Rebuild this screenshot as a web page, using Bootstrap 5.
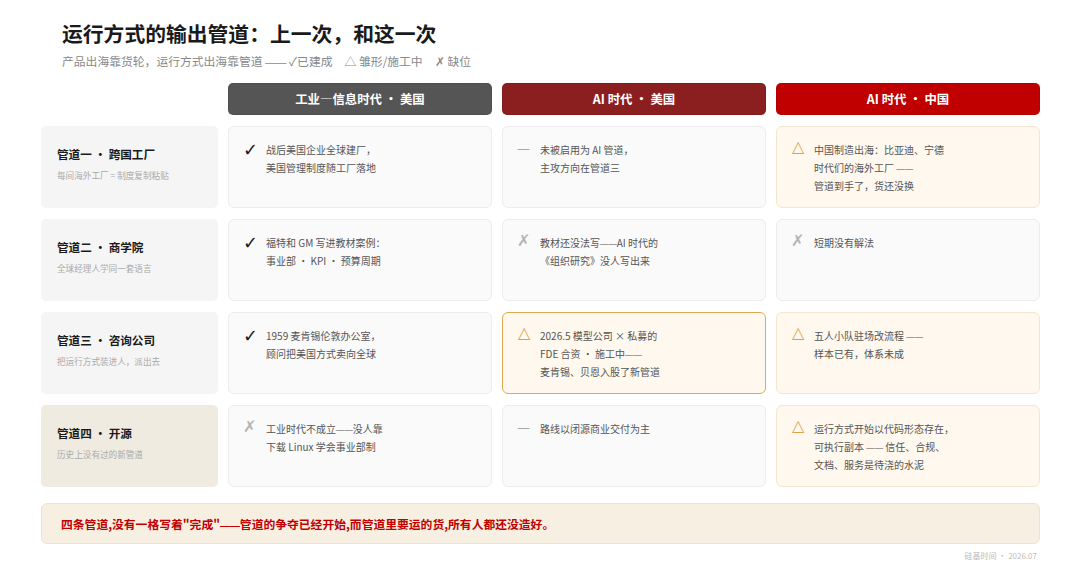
<!DOCTYPE html>
<html lang="zh-CN">
<head>
    <meta charset="UTF-8">
    <meta name="viewport" content="width=device-width, initial-scale=1">
    <title>运行方式的输出管道</title>
    <link href="https://cdn.jsdelivr.net/npm/bootstrap@5.3.0/dist/css/bootstrap.min.css" rel="stylesheet">
    <script src="https://cdn.jsdelivr.net/npm/bootstrap@5.3.0/dist/js/bootstrap.bundle.min.js"></script>
    <style>
        body {
            background: #fff;
            font-family: "Noto Sans CJK SC", "Noto Sans", sans-serif;
            color: #333;
            width: 1080px;
            height: 568px;
            overflow: hidden;
        }
        .slide { padding: 19px 40px 0 41px; }
        .page-head { padding-left: 21px; height: 64px; }
        .page-title { font-size: 20.8px; line-height: 28px; font-weight: 700; color: #1a1a1a; margin: 0; }
        .page-sub { font-size: 11.8px; line-height: 18px; color: #888; margin-top: 5px; }
        .legend-item { margin-left: 1.5px; }
        .pipe-grid {
            grid-template-columns: 177px repeat(3, 264px);
            grid-template-rows: 32px repeat(4, 82px);
            column-gap: 10px;
            row-gap: 11px;
        }
        .era { font-size: 12.4px; font-weight: 700; border-radius: 5px; color: #fff; border: 1px solid rgba(0,0,0,.08); }
        .era-grey { background: #555; }
        .era-dark { background: #8b1f1f; }
        .era-red { background: #c00000; }
        .pipe { background: #f5f5f5; border-radius: 5px; padding: 0 15px 6px 16px; }
        .pipe-open { background: #f0ebe0; }
        .pipe-name { font-size: 11.6px; line-height: 17px; font-weight: 700; color: #1a1a1a; }
        .pipe-note { font-size: 8.6px; line-height: 13px; color: #aaa; margin-top: 6px; }
        .cell {
            background: #fafafa;
            border: 1px solid #ececec;
            border-radius: 6px;
            padding: 14px 10px 0 14px;
            font-size: 10px;
            line-height: 18px;
            color: #555;
        }
        .cell-warm { background: #fff8ee; border-color: #f5e7cf; }
        .cell-hot { background: #fff8ee; border-color: #e0a950; }
        .status { flex: 0 0 23px; width: 23px; height: 18px; font-family: "DejaVu Sans", sans-serif; line-height: 14px; font-size: 16px; }
        .status-yes { color: #1a1a1a; font-weight: 700; font-size: 18px; line-height: 18px; }
        .status-no { color: #b4b4b4; }
        .status-dash { color: #a8a8a8; font-size: 13px; line-height: 16px; }
        .status-warn { color: #dea24a; font-size: 16px; line-height: 12px; padding-left: 1px; }
        .dash { font-family: "Liberation Sans", sans-serif; font-size: .84em; line-height: 1; }
        .page-sub .dash { font-size: .9em; }
        .summary {
            margin-top: 16px;
            height: 41px;
            background: #f6efe2;
            border: 1px solid #eee3cf;
            border-radius: 6px;
            padding-left: 19px;
            font-size: 11.8px;
            font-weight: 700;
            color: #c00000;
        }
        .foot { font-size: 8px; line-height: 12px; color: #bbb; margin-top: 6px; padding-right: 3px; }
    </style>
</head>
<body>
    <div class="slide">
        <div class="page-head">
            <h1 class="page-title">运行方式的输出管道：上一次，和这一次</h1>
            <div class="page-sub">产品出海靠货轮，运行方式出海靠管道 <span class="dash">——</span> ✓已建成 &nbsp;&nbsp; <span class="legend-item">△ 雏形/施工中</span> &nbsp;&nbsp; <span class="legend-item">✗ 缺位</span></div>
        </div>

        <div class="pipe-grid d-grid">
            <div></div>
            <div class="era era-grey d-flex align-items-center justify-content-center">工业—信息时代 · 美国</div>
            <div class="era era-dark d-flex align-items-center justify-content-center">AI 时代 · 美国</div>
            <div class="era era-red d-flex align-items-center justify-content-center">AI 时代 · 中国</div>

            <!-- 管道一 -->
            <div class="pipe d-flex flex-column justify-content-center">
                <div class="pipe-name">管道一 · 跨国工厂</div>
                <div class="pipe-note">每间海外工厂 = 制度复制粘贴</div>
            </div>
            <div class="cell d-flex"><span class="status status-yes">✓</span><div>战后美国企业全球建厂，<br>美国管理制度随工厂落地</div></div>
            <div class="cell d-flex"><span class="status status-dash">—</span><div>未被启用为 AI 管道，<br>主攻方向在管道三</div></div>
            <div class="cell cell-warm d-flex"><span class="status status-warn">△</span><div>中国制造出海：比亚迪、宁德<br>时代们的海外工厂 <span class="dash">——</span><br>管道到手了，货还没换</div></div>

            <!-- 管道二 -->
            <div class="pipe d-flex flex-column justify-content-center">
                <div class="pipe-name">管道二 · 商学院</div>
                <div class="pipe-note">全球经理人学同一套语言</div>
            </div>
            <div class="cell d-flex"><span class="status status-yes">✓</span><div>福特和 GM 写进教材案例：<br>事业部 · KPI · 预算周期</div></div>
            <div class="cell d-flex"><span class="status status-no">✗</span><div>教材还没法写<span class="dash">——</span>AI 时代的<br>《组织研究》没人写出来</div></div>
            <div class="cell d-flex"><span class="status status-no">✗</span><div>短期没有解法</div></div>

            <!-- 管道三 -->
            <div class="pipe d-flex flex-column justify-content-center">
                <div class="pipe-name">管道三 · 咨询公司</div>
                <div class="pipe-note">把运行方式装进人，派出去</div>
            </div>
            <div class="cell d-flex"><span class="status status-yes">✓</span><div>1959 麦肯锡伦敦办公室，<br>顾问把美国方式卖向全球</div></div>
            <div class="cell cell-hot d-flex"><span class="status status-warn">△</span><div>2026.5 模型公司 × 私募的<br>FDE 合资 · 施工中<span class="dash">——</span><br>麦肯锡、贝恩入股了新管道</div></div>
            <div class="cell cell-warm d-flex"><span class="status status-warn">△</span><div>五人小队驻场改流程 <span class="dash">——</span><br>样本已有，体系未成</div></div>

            <!-- 管道四 -->
            <div class="pipe pipe-open d-flex flex-column justify-content-center">
                <div class="pipe-name">管道四 · 开源</div>
                <div class="pipe-note">历史上没有过的新管道</div>
            </div>
            <div class="cell d-flex"><span class="status status-no">✗</span><div>工业时代不成立<span class="dash">——</span>没人靠<br>下载 Linux 学会事业部制</div></div>
            <div class="cell d-flex"><span class="status status-dash">—</span><div>路线以闭源商业交付为主</div></div>
            <div class="cell cell-warm d-flex"><span class="status status-warn">△</span><div>运行方式开始以代码形态存在，<br>可执行副本 <span class="dash">——</span> 信任、合规、<br>文档、服务是待浇的水泥</div></div>
        </div>

        <div class="summary d-flex align-items-center"><span>四条管道,没有一格写着"完成"<span class="dash">——</span>管道的争夺已经开始,而管道里要运的货,所有人都还没造好。</span></div>
        <div class="foot text-end">硅基时间 · 2026.07</div>
    </div>
</body>
</html>
